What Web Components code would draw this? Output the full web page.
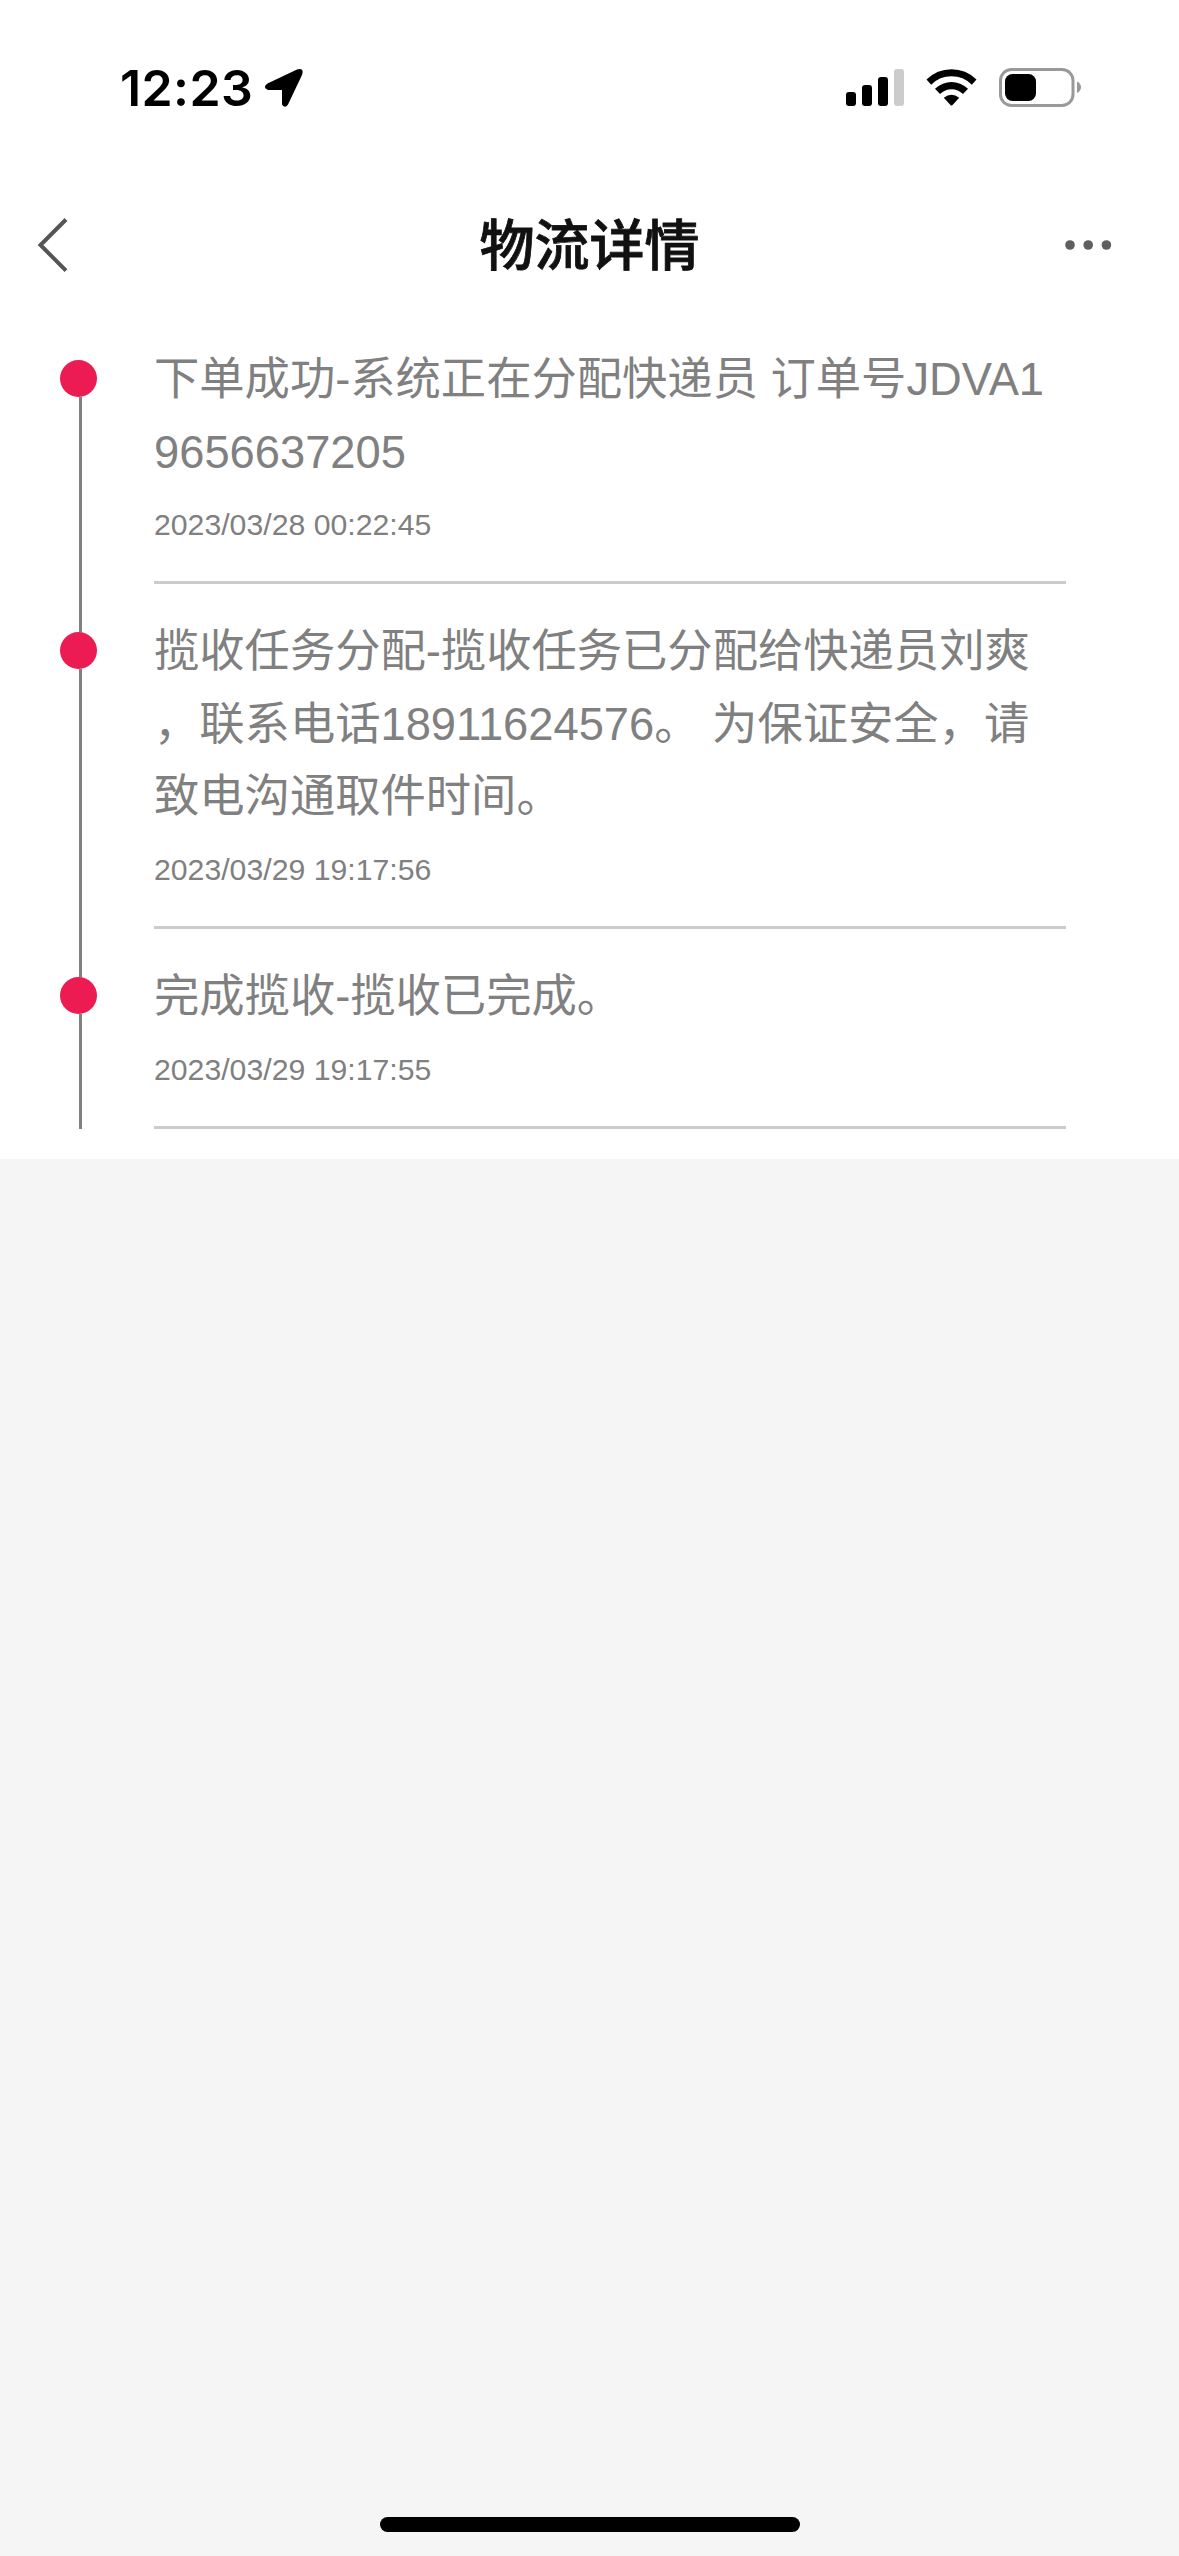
<!DOCTYPE html>
<html lang="zh-CN">
<head>
  <meta charset="UTF-8">
  <meta name="viewport" content="width=device-width, initial-scale=1.0">
  <title>物流详情</title>
  <style>
    body {
      margin: 0;
      height: 2556px;
      display: flex;
      flex-direction: column;
      background: #f5f5f5;
      font-family: "Liberation Sans", "Noto Sans CJK SC", sans-serif;
      overflow: hidden;
    }
  </style>
</head>
<body>
  <status-bar time="12:23"></status-bar>
  <nav-bar>物流详情</nav-bar>
  <track-list>
    <track-item time="2023/03/28 00:22:45">下单成功-系统正在分配快递员 订单号JDVA19656637205</track-item>
    <track-item time="2023/03/29 19:17:56">揽收任务分配-揽收任务已分配给快递员刘爽，联系电话18911624576。 为保证安全，请致电沟通取件时间。</track-item>
    <track-item time="2023/03/29 19:17:55">完成揽收-揽收已完成。</track-item>
  </track-list>
  <home-indicator></home-indicator>

  <script>
    class StatusBar extends HTMLElement {
      constructor(){
        super()
        this.shadowDOM = this.attachShadow({mode: 'open'})
      }

      connectedCallback(){
        this.render()
      }

      render(){
        this.shadowDOM.innerHTML = `
          <style>
            :host {
              box-sizing: border-box;
              display: flex;
              justify-content: space-between;
              height: 178px;
              padding: 50px 90px 0 120px;
              background: #fff;
            }
            .left, .right {
              display: flex;
              align-items: center;
              height: 76px;
            }
            .time {
              font: 600 50px/76px Inter, sans-serif;
              width: 144px;
              letter-spacing: 0.4px;
              white-space: nowrap;
              color: #000;
            }
            svg {
              display: block;
            }
          </style>

          <div class="left">
            <span class="time">${this.getAttribute('time')}</span>
            <svg width="40" height="40" viewBox="0 0 40 40">
              <path d="M3.500 15.500 33 1.500Q40.500-.500 38 7L24 36.500Q21 41 18 36.500V22H4Q-2 19.500 3.500 15.500Z"/>
            </svg>
          </div>
          <div class="right">
            <svg width="243" height="40" viewBox="846 68 243 40">
              <rect x="846" y="92" width="10" height="14" rx="3"/>
              <rect x="862" y="85" width="10" height="21" rx="3"/>
              <rect x="878" y="77" width="10" height="29" rx="3"/>
              <rect x="894" y="69" width="10" height="37" rx="3" fill="#ccc"/>
              <path d="M926.5 79.5Q937 69.200 951.500 69.200T976.500 79.500L971.800 84.700Q963.500 76.300 951.500 76.300T931.200 84.700Z"/>
              <path d="M935 88.800Q942.500 81.900 951.500 81.900T968 88.800L963 94Q958 89.300 951.500 89.300T940 94Z"/>
              <path d="M943.800 97.800Q951.500 91.600 959.200 97.800L952.300 105.200Q951.500 106 950.700 105.200Z"/>
              <rect x="1000.500" y="69.500" width="72.500" height="36" rx="11" fill="none" stroke="#999" stroke-width="3"/>
              <rect x="1005" y="74" width="31" height="27" rx="7.500"/>
              <path d="M1077 81.500Q1081 83.500 1081 87.300T1077 93Z" fill="#999"/>
            </svg>
          </div>
        `
      }
    }

    class NavBar extends HTMLElement {
      constructor(){
        super()
        this.shadowDOM = this.attachShadow({mode: 'open'})
      }

      connectedCallback(){
        this.render()
      }

      render(){
        this.shadowDOM.innerHTML = `
          <style>
            :host {
              box-sizing: border-box;
              display: flex;
              justify-content: space-between;
              align-items: center;
              height: 134px;
              padding: 0 67px 0 36px;
              background: #fff;
            }
            .side {
              flex: 1;
              display: flex;
            }
            .side:last-child {
              justify-content: flex-end;
            }
            h1 {
              margin: 0 0 9px 31px;
              font: 500 55px/80px "Noto Sans CJK SC", sans-serif;
              -webkit-text-stroke: 0.8px #111;
              color: #111;
            }
          </style>

          <div class="side">
            <svg width="34" height="56" viewBox="36 217 34 56" fill="none" stroke="#555" stroke-width="4">
              <path d="M66 219.500 40.500 245 66 270.700"/>
            </svg>
          </div>
          <h1><slot></slot></h1>
          <div class="side">
            <svg width="48" height="12" viewBox="1064 239 48 12" fill="#5f5f5d">
              <circle cx="1070" cy="245" r="4.800"/>
              <circle cx="1088.200" cy="245" r="4.800"/>
              <circle cx="1106.400" cy="245" r="4.800"/>
            </svg>
          </div>
        `
      }
    }

    class TrackList extends HTMLElement {
      constructor(){
        super()
        this.shadowDOM = this.attachShadow({mode: 'open'})
      }

      connectedCallback(){
        this.render()
      }

      render(){
        this.shadowDOM.innerHTML = `
          <style>
            :host {
              display: flex;
              flex-direction: column;
              padding: 0 113px 30px 60px;
              background: #fff;
            }
          </style>

          <slot></slot>
        `
      }
    }

    class TrackItem extends HTMLElement {
      constructor(){
        super()
        this.shadowDOM = this.attachShadow({mode: 'open'})
      }

      connectedCallback(){
        this.render()
      }

      render(){
        this.shadowDOM.innerHTML = `
          <style>
            :host {
              display: flex;
              color: #808080;
            }
            .rail {
              flex: none;
              display: flex;
              flex-direction: column;
              width: 94px;
            }
            .line {
              width: 3px;
              margin-left: 18.5px;
              background: #808080;
            }
            .line.top {
              height: 48px;
            }
            .line.bottom {
              flex: 1;
            }
            /* nothing above the first dot */
            :host(:first-of-type) .line.top {
              background: none;
            }
            .dot {
              width: 37px;
              height: 37px;
              border-radius: 50%;
              background: #ec1b51;
            }
            .content {
              flex: 1;
              padding-top: 32px;
              border-bottom: 3px solid #ccc;
            }
            p {
              margin: 0;
              font-size: 45.3px;
              line-height: 72.6px;
              word-break: break-all;
              line-break: anywhere;
            }
            time {
              display: block;
              padding: 13.3px 0 33.4px;
              font-size: 30.23px;
              line-height: 45.4px;
            }
          </style>

          <div class="rail">
            <div class="line top"></div>
            <div class="dot"></div>
            <div class="line bottom"></div>
          </div>
          <div class="content">
            <p><slot></slot></p>
            <time>${this.getAttribute('time')}</time>
          </div>
        `
      }
    }

    class HomeIndicator extends HTMLElement {
      constructor(){
        super()
        this.shadowDOM = this.attachShadow({mode: 'open'})
      }

      connectedCallback(){
        this.render()
      }

      render(){
        this.shadowDOM.innerHTML = `
          <style>
            :host {
              display: flex;
              justify-content: center;
              margin-top: auto;
              padding: 0 0 24px 1px;
            }
            div {
              width: 420px;
              height: 15px;
              border-radius: 8px;
              background: #000;
            }
          </style>

          <div></div>
        `
      }
    }

    customElements.define('status-bar', StatusBar);
    customElements.define('nav-bar', NavBar);
    customElements.define('track-list', TrackList);
    customElements.define('track-item', TrackItem);
    customElements.define('home-indicator', HomeIndicator);
  </script>
</body>
</html>
